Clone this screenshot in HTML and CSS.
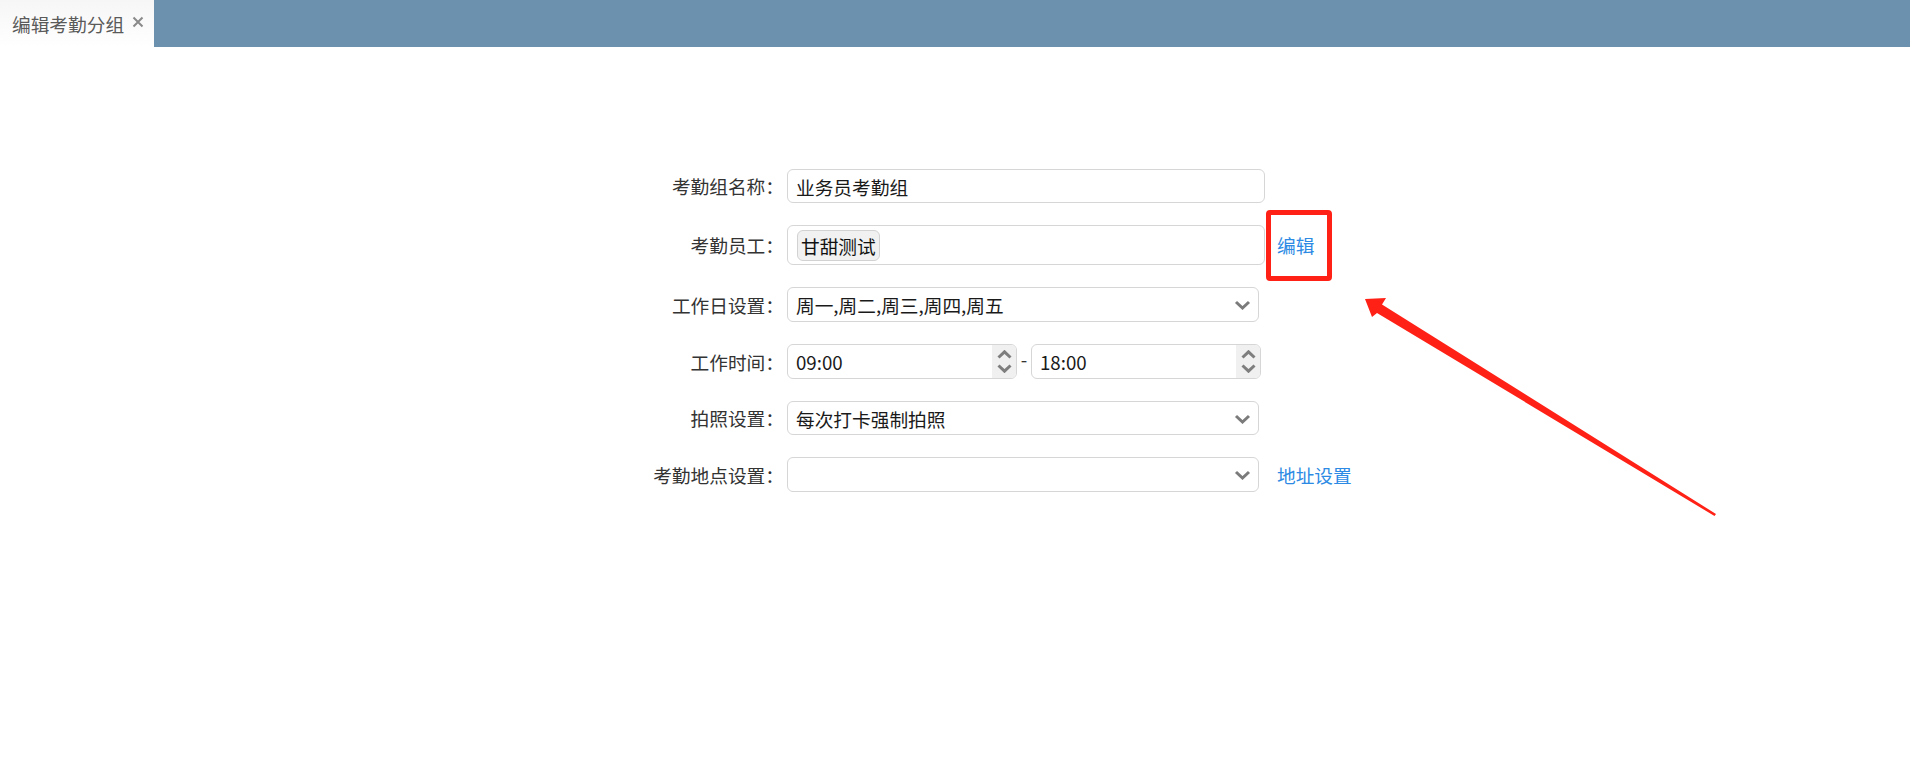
FILE: index.html
```html
<!DOCTYPE html>
<html lang="zh-CN">
<head>
<meta charset="utf-8">
<title>编辑考勤分组</title>
<link rel="stylesheet" href="styles.css">
</head>
<body>
<div class="tabbar">
  <div class="tab">
    <span class="tab-title">编辑考勤分组</span>
    <svg class="tab-close" width="12" height="12" viewBox="0 0 12 12"><path d="M1.5 1.5L10.5 10.5M10.5 1.5L1.5 10.5" stroke="#8a8a8a" stroke-width="2" fill="none"/></svg>
  </div>
</div>

<main class="form">
  <label class="lbl">考勤组名称：</label>
  <div class="box box-name">业务员考勤组</div>
  <div class="extra"></div>

  <label class="lbl">考勤员工：</label>
  <div class="box box-emp"><span class="tag">甘甜测试</span></div>
  <div class="extra"><a class="link link-edit">编辑</a></div>

  <label class="lbl">工作日设置：</label>
  <div class="box box-select">周一,周二,周三,周四,周五
    <svg class="chev" width="17" height="10" viewBox="0 0 17 10"><path d="M2 2L8.5 8L15 2" stroke="#7b7b7b" stroke-width="3" fill="none"/></svg>
  </div>
  <div class="extra"></div>

  <label class="lbl">工作时间：</label>
  <div class="time-row">
    <div class="box box-time">09:00
      <div class="spin">
        <svg width="15" height="9" viewBox="0 0 15 9"><path d="M1.5 7.5L7.5 1.8L13.5 7.5" stroke="#7e7e7e" stroke-width="3" fill="none"/></svg>
        <svg width="15" height="9" viewBox="0 0 15 9"><path d="M1.5 1.5L7.5 7.2L13.5 1.5" stroke="#7e7e7e" stroke-width="3" fill="none"/></svg>
      </div>
    </div>
    <span class="dash">-</span>
    <div class="box box-time">18:00
      <div class="spin">
        <svg width="15" height="9" viewBox="0 0 15 9"><path d="M1.5 7.5L7.5 1.8L13.5 7.5" stroke="#7e7e7e" stroke-width="3" fill="none"/></svg>
        <svg width="15" height="9" viewBox="0 0 15 9"><path d="M1.5 1.5L7.5 7.2L13.5 1.5" stroke="#7e7e7e" stroke-width="3" fill="none"/></svg>
      </div>
    </div>
  </div>
  <div class="extra"></div>

  <label class="lbl">拍照设置：</label>
  <div class="box box-select box-photo">每次打卡强制拍照
    <svg class="chev" width="17" height="10" viewBox="0 0 17 10"><path d="M2 2L8.5 8L15 2" stroke="#7b7b7b" stroke-width="3" fill="none"/></svg>
  </div>
  <div class="extra"></div>

  <label class="lbl">考勤地点设置：</label>
  <div class="box box-select">
    <svg class="chev" width="17" height="10" viewBox="0 0 17 10"><path d="M2 2L8.5 8L15 2" stroke="#7b7b7b" stroke-width="3" fill="none"/></svg>
  </div>
  <div class="extra"><a class="link">地址设置</a></div>
</main>

<svg class="annot" width="1910" height="774" viewBox="0 0 1910 774">
  <polygon points="1365,299 1386,298 1382,304.5 1716,514 1714.5,516 1377,313 1372,317" fill="#ff2116"/>
</svg>
</body>
</html>
```

FILE: styles.css
```css
html, body {
  margin: 0;
  padding: 0;
  background: #ffffff;
}

body {
  font-family: "Noto Sans CJK SC", "Microsoft YaHei", sans-serif;
  font-size: 18.7px;
  color: #222;
  width: 1910px;
  height: 774px;
  position: relative;
  overflow: hidden;
}

.tabbar {
  height: 47px;
  background: #6c91ae;
  display: flex;
}

.tab {
  width: 154px;
  height: 47px;
  background: linear-gradient(#f6f6f6, #ffffff);
  display: flex;
  align-items: center;
  box-sizing: border-box;
  padding-left: 12px;
}

.tab-title {
  color: #5a5a5a;
  line-height: 26px;
}

.tab-close {
  margin-left: 8px;
  margin-top: -3px;
}

.form {
  display: grid;
  grid-template-columns: 150px 487px auto;
  column-gap: 3px;
  row-gap: 22px;
  padding-top: 122px;
  margin-left: 634px;
}

.lbl {
  text-align: right;
  align-self: center;
  color: #333;
  line-height: 26px;
  white-space: nowrap;
}

.box {
  box-sizing: border-box;
  border: 1px solid #d6d6d6;
  border-radius: 6px;
  background: #fff;
  display: flex;
  align-items: center;
  padding-left: 8px;
  position: relative;
  color: #1a1a1a;
  white-space: nowrap;
}

.box-name {
  width: 478px;
  height: 34px;
}

.box-emp {
  width: 478px;
  height: 40px;
  padding-left: 9px;
}

.tag {
  box-sizing: border-box;
  height: 31px;
  padding: 0 3px;
  border: 1px solid #d2d2d2;
  border-radius: 6px;
  background: #f1f1f1;
  display: flex;
  align-items: center;
  color: #111;
}

.box-select {
  width: 472px;
  height: 35px;
}

.box-photo {
  height: 34px;
}

.chev {
  position: absolute;
  right: 7px;
  top: 12px;
}

.time-row {
  display: flex;
  align-items: center;
}

.box-time {
  width: 230px;
  height: 35px;
  overflow: hidden;
}

.spin {
  position: absolute;
  right: 0;
  top: 0;
  bottom: 0;
  width: 24px;
  background: #f0f0f0;
  display: flex;
  flex-direction: column;
  align-items: center;
  justify-content: center;
  gap: 5px;
}

.dash {
  width: 14px;
  text-align: center;
  color: #333;
  line-height: 20px;
  margin-top: -6px;
}

.extra {
  display: flex;
  align-items: center;
}

.link {
  color: #2c8ae4;
  line-height: 26px;
  position: relative;
  cursor: pointer;
}

.link-edit::after {
  content: "";
  position: absolute;
  left: -11px;
  top: -22px;
  width: 66px;
  height: 71px;
  box-sizing: border-box;
  border: 5px solid #ff2116;
  border-radius: 4px;
}

.annot {
  position: absolute;
  left: 0;
  top: 0;
  pointer-events: none;
}
```
